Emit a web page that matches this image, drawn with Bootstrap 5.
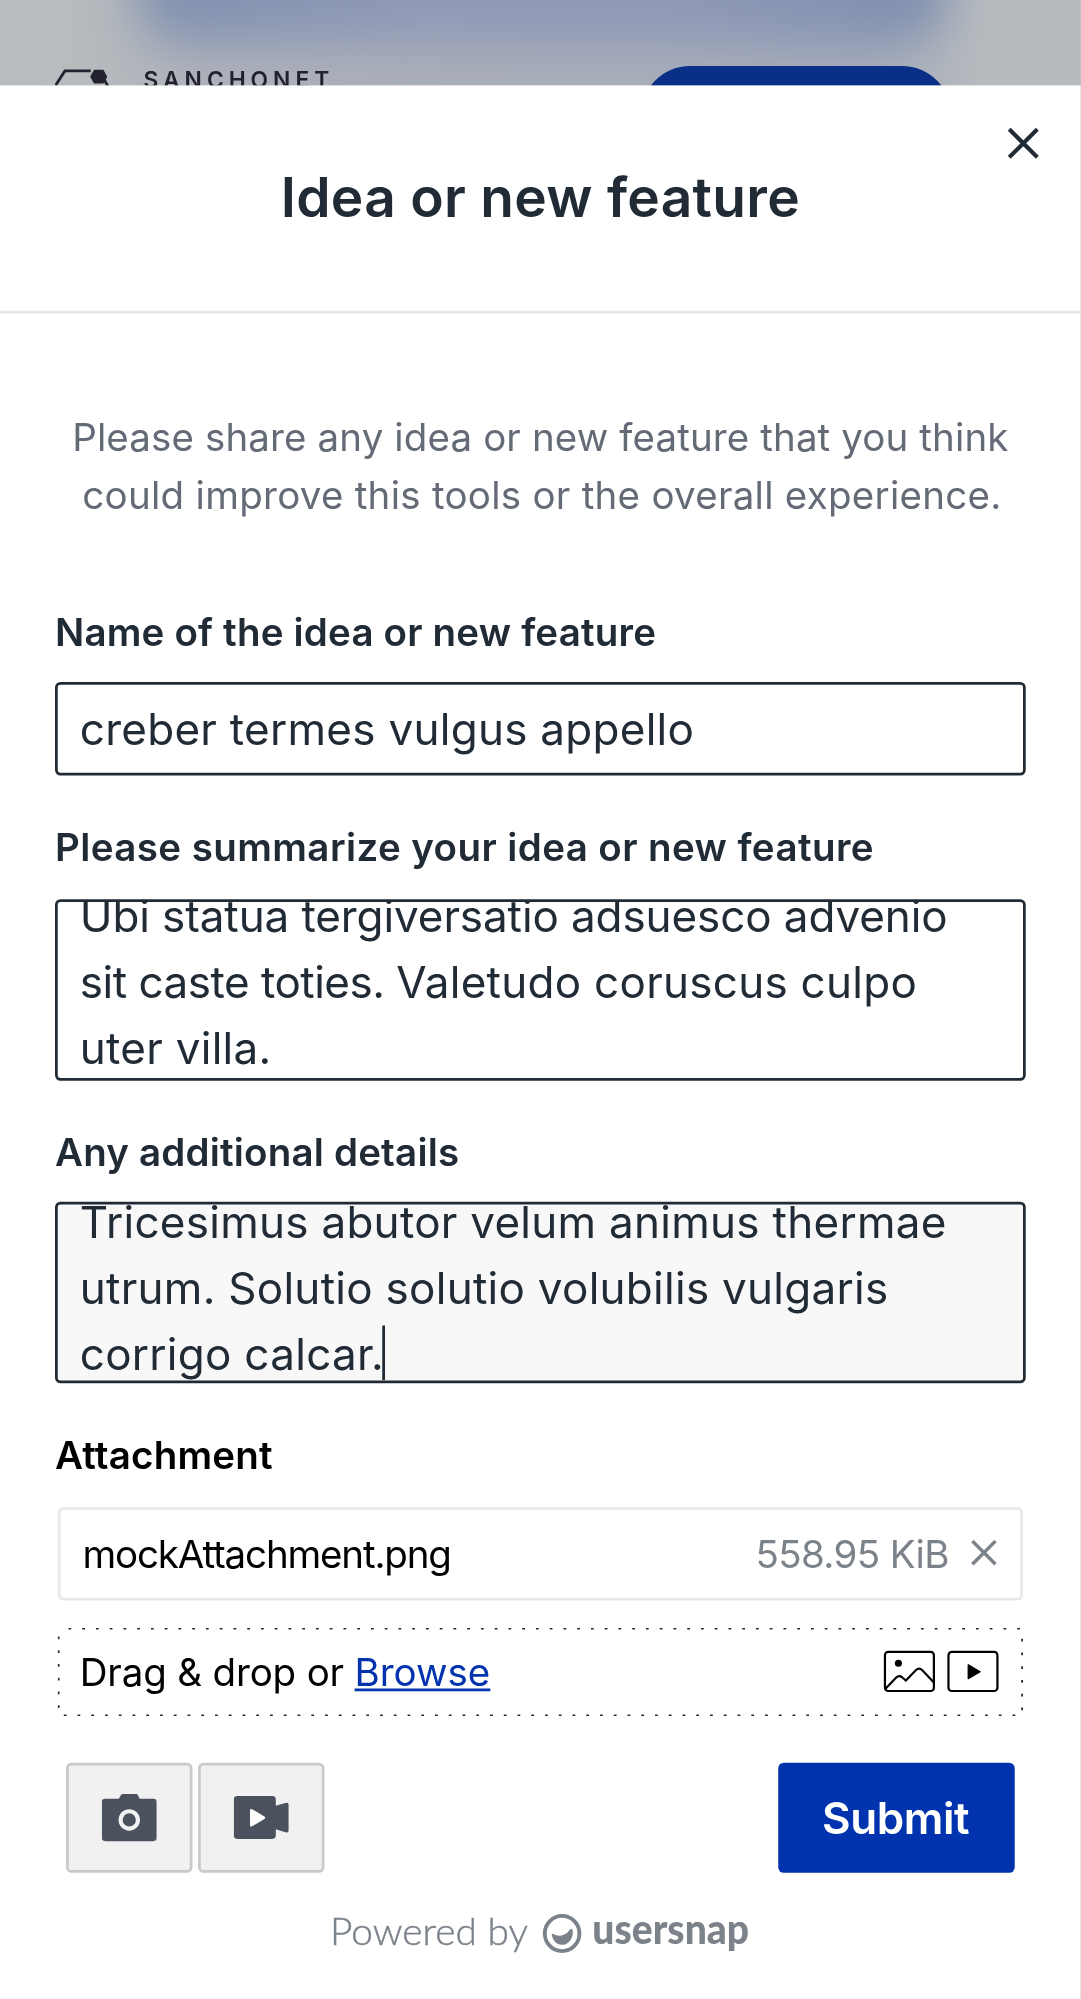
<!DOCTYPE html>
<html lang="en">
<head>
<meta charset="utf-8">
<meta name="viewport" content="width=device-width, initial-scale=1">
<title>Idea or new feature</title>
<link href="https://cdn.jsdelivr.net/npm/bootstrap@5.3.0/dist/css/bootstrap.min.css" rel="stylesheet">
<style>
html, body { height: 100%; overflow: hidden; }
body { font-family: Inter, "Liberation Sans", sans-serif; font-size: 14px; line-height: 21px; color: #212b36; background: #e9e9ea; }
/* 393x727 phone viewport, enlarged to the window */
.screen { width: 393px; height: 727px; transform: scale(2.75); transform-origin: 0 0; overflow: hidden; background: #b8bcc0; }
.page-top { height: 31px; overflow: hidden; background: linear-gradient(90deg, #b8bdbf 0 4%, #b0b3bb 20%, #a9aeb9 50%, #a8aebb 80%, #b7bbbf 91%); }
.glow { left: 50px; top: -42px; width: 294px; height: 58px; border-radius: 16px; background: linear-gradient(90deg, #8090b0, #8f99b6 35%, #8f99b6 65%, #7e8eaf); filter: blur(9px); }
.top-row { padding-left: 20px; padding-right: 47px; padding-top: 24px; }
.brand-name { font-size: 8.3px; line-height: 10px; letter-spacing: 1.8px; font-weight: 600; color: #22222e; margin-left: 11.2px; padding-top: .3px; }
.pill { width: 113px; height: 36px; background: #0a2f87; }
.panel { height: 696px; background: #fff; }
.panel-head { height: 83px; border-bottom: 1px solid #e5e7eb; padding-top: 25.7px; }
.panel-title { font-size: 20px; line-height: 30px; font-weight: 600; letter-spacing: .11px; }
.close-x { right: 13px; top: 13px; width: 16px; height: 16px; }
.panel-body { padding: 34px 20px 0; }
.intro { color: #646b76; margin-bottom: 29px; }
.intro-end { padding-left: 1.2px; }
.field-label { font-weight: 600; line-height: 21px; height: 21px; margin-bottom: 8px; letter-spacing: .07px; }
.label-roomy { margin-bottom: 9px; }
.field { border: 1px solid #212b36; border-radius: 2px; padding: 0 8px; font-size: 16px; line-height: 24px; color: #212b36; background: #fff; }
.field-line { height: 34px; width: 100%; display: block; margin-bottom: 15px; outline: 0; letter-spacing: .1px; }
.field-area { height: 66px; overflow: hidden; white-space: nowrap; margin-bottom: 15px; }
.scrolled-a { margin-top: -7px; }
.scrolled-b { margin-top: -5.6px; }
.field.active { background: #f8f8f8; }
.ls-wide { letter-spacing: .15px; }
.ls-mid { letter-spacing: .1px; }
.ls-soft { letter-spacing: .045px; }
.ls-snug { letter-spacing: -.035px; }
.ls-tight { letter-spacing: -.18px; }
.caret { display: inline-block; width: 1px; height: 20px; margin-left: -1px; background: #212b36; vertical-align: -4px; }
.file-row { margin: 0 1px 10px; height: 34px; border: 1px solid #e9e9ea; border-radius: 2px; padding: 0 8px; color: #000; }
.file-name { letter-spacing: -.42px; margin-top: -2px; }
.file-size { color: #7b828a; letter-spacing: -.23px; margin-top: -2px; }
.drop { height: 32px; margin: 0 1px; padding: 0 8px; color: #000; }
.drop-text { letter-spacing: -.06px; margin-top: -1.5px; }
.drop a { color: #0033ad; letter-spacing: 0; text-underline-offset: 1px; }
.dots { left: 0; top: 0; width: 351px; height: 32px; }
.actions { margin: 17px 4px 0; }
.tool-btn { width: 46px; height: 40px; border: 1px solid #c8c9cd; background: #f1f1f1; border-radius: 2px; padding: 0; margin-right: 2px; }
.submit-btn { width: 86px; height: 40px; border-radius: 2px; background: #0033ad; color: #fff; font-size: 16px; font-weight: 600; border: 0; padding: 0 .7px 0 0; letter-spacing: -.15px; }
.credit { display: block; margin: 12px auto 0; }
</style>
<script src="https://cdn.jsdelivr.net/npm/bootstrap@5.3.0/dist/js/bootstrap.bundle.min.js"></script>
</head>
<body>
<div class="screen">
  <div class="page-top position-relative">
    <div class="glow position-absolute"></div>
    <div class="top-row position-relative d-flex align-items-start">
      <svg width="21" height="12" viewBox="0 0 21 12" fill="none" stroke="#22222e" stroke-width="1"><path d="M0 7.4 3.6 1.8H13M17.8 4.8 20.4 9.4"/><path d="M12.8 3.9 14.2 1.4h3.4L19 3.9 17.6 6.4H14.2z" fill="#22222e" stroke="none"/></svg>
      <span class="brand-name">SANCHONET</span>
      <span class="pill rounded-pill ms-auto"></span>
    </div>
  </div>
  <div class="panel">
    <header class="panel-head position-relative text-center">
      <h1 class="panel-title m-0">Idea or new feature</h1>
      <svg class="close-x position-absolute" viewBox="0 0 16 16" stroke="#212b36" stroke-width="1.5"><path d="M3 3 13.2 13.2M13.2 3 3 13.2"/></svg>
    </header>
    <form class="panel-body">
      <p class="intro text-center"><span class="ls-soft">Please share any idea or new feature that you think</span><br><span class="ls-mid intro-end">could improve this tools or the overall experience.</span></p>
      <label class="field-label d-block" for="idea">Name of the idea or new feature</label>
      <input class="field field-line" id="idea" value="creber termes vulgus appello">
      <div class="field-label label-roomy ls-wide">Please summarize your idea or new feature</div>
      <div class="field field-area" role="textbox"><div class="scrolled-a"><span class="ls-snug">Ubi statua tergiversatio adsuesco advenio</span><br><span class="ls-tight">sit caste toties. </span><span class="ls-mid">Valetudo coruscus culpo</span><br><span class="ls-mid">uter villa.</span></div></div>
      <div class="field-label">Any additional details</div>
      <div class="field field-area active" role="textbox"><div class="scrolled-b ls-mid">Tricesimus abutor velum animus thermae<br>utrum. Solutio solutio volubilis vulgaris<br>corrigo calcar.<span class="caret"></span></div></div>
      <div class="field-label label-roomy text-black">Attachment</div>
      <div class="file-row d-flex align-items-center">
        <span class="file-name">mockAttachment.png</span>
        <span class="file-size ms-auto">558.95 KiB</span>
        <svg class="ms-2" width="10" height="10" viewBox="0 0 10 10" stroke="#7b828a" stroke-width="1.25"><path d="M.6.4 9 8.8M9 .4.6 8.8"/></svg>
      </div>
      <div class="drop position-relative d-flex align-items-center">
        <svg class="dots position-absolute start-0" viewBox="0 0 351 32" fill="none" stroke="#212b36" stroke-width=".7" stroke-dasharray="1 4"><path d="M3.9.2H350M2.2 31.8H350M.3 3.1V30M350.7 3.9V30"/></svg>
        <span class="drop-text">Drag &amp; drop or <a href="#">Browse</a></span>
        <svg class="ms-auto" width="43" height="16" viewBox="0 0 43 16" fill="none" stroke="#000" stroke-width=".8"><rect x=".8" y=".7" width="17.8" height="14.2" rx="1.2"/><path d="M.9 14.2 4.9 10Q5.9 9 7 9.9L8.4 11.1 12.1 7.3Q13.2 6.2 14.3 7.3L18.6 11.8"/><circle cx="5.7" cy="4.8" r="1.3" fill="#000" stroke="none"/><rect x="23.9" y=".7" width="17.8" height="14.2" rx="1.2"/><path d="M31.1 5.4V10.4L35.4 7.9z" fill="#000" stroke-width=".5" stroke-linejoin="round"/></svg>
      </div>
      <div class="actions d-flex">
        <button type="button" class="tool-btn d-flex align-items-center justify-content-center" aria-label="Screenshot"><svg width="20" height="18" viewBox="0 0 20 18"><path fill="#4b515d" d="M1.3 2.1H6.2L6.9.9Q7.1.4 7.6.4H12.6Q13 .4 13.2.9L13.8 2.1H18.7Q20 2.1 20 3.3V16.3Q20 17.5 18.7 17.5H1.3Q0 17.5 0 16.3V3.3Q0 2.1 1.3 2.1z"/><circle cx="10" cy="9.8" r="3.15" fill="none" stroke="#f1f1f1" stroke-width="1.5"/></svg></button>
        <button type="button" class="tool-btn d-flex align-items-center justify-content-center" aria-label="Record video"><svg width="20" height="18" viewBox="0 0 20 18"><path fill="#4b515d" d="M1.3 1.1H14Q15.3 1.1 15.3 2.4V4.6L18.8 3.6Q20 3.3 20 4.3V13.6Q20 14.6 18.8 14.3L15.3 13.2V15.4Q15.3 16.7 14 16.7H1.3Q0 16.7 0 15.4V2.4Q0 1.1 1.3 1.1z"/><path d="M6.4 6.3V11.7L10.9 9z" fill="#fff" stroke="#fff" stroke-width="1" stroke-linejoin="round"/></svg></button>
        <button type="button" class="submit-btn ms-auto">Submit</button>
      </div>
      <svg class="credit" width="153" height="20" viewBox="0 0 153 20" fill="#7b828a"><text x="0" y="14.1" font-family="Lato" font-weight="300" font-size="13.7" stroke="#7b828a" stroke-width=".15" textLength="72" lengthAdjust="spacingAndGlyphs">Powered by</text><ellipse cx="84.4" cy="10.1" rx="6.3" ry="6.4" fill="none" stroke="#7b828a" stroke-width="1.4"/><path d="M80.6 10.5Q80.6 10 81.2 10.3 83.2 11.4 85 10.5 86.6 9.8 87.1 8.8 87.8 7.9 88.2 8.8 88.6 10.8 87.4 12.5 86.2 14.2 84.3 14.2 81.4 14.1 80.6 10.5z"/><text x="95.4" y="13.9" font-family="Lato" font-weight="900" font-size="15.2" textLength="57" lengthAdjust="spacingAndGlyphs">usersnap</text></svg>
    </form>
  </div>
</div>
</body>
</html>
